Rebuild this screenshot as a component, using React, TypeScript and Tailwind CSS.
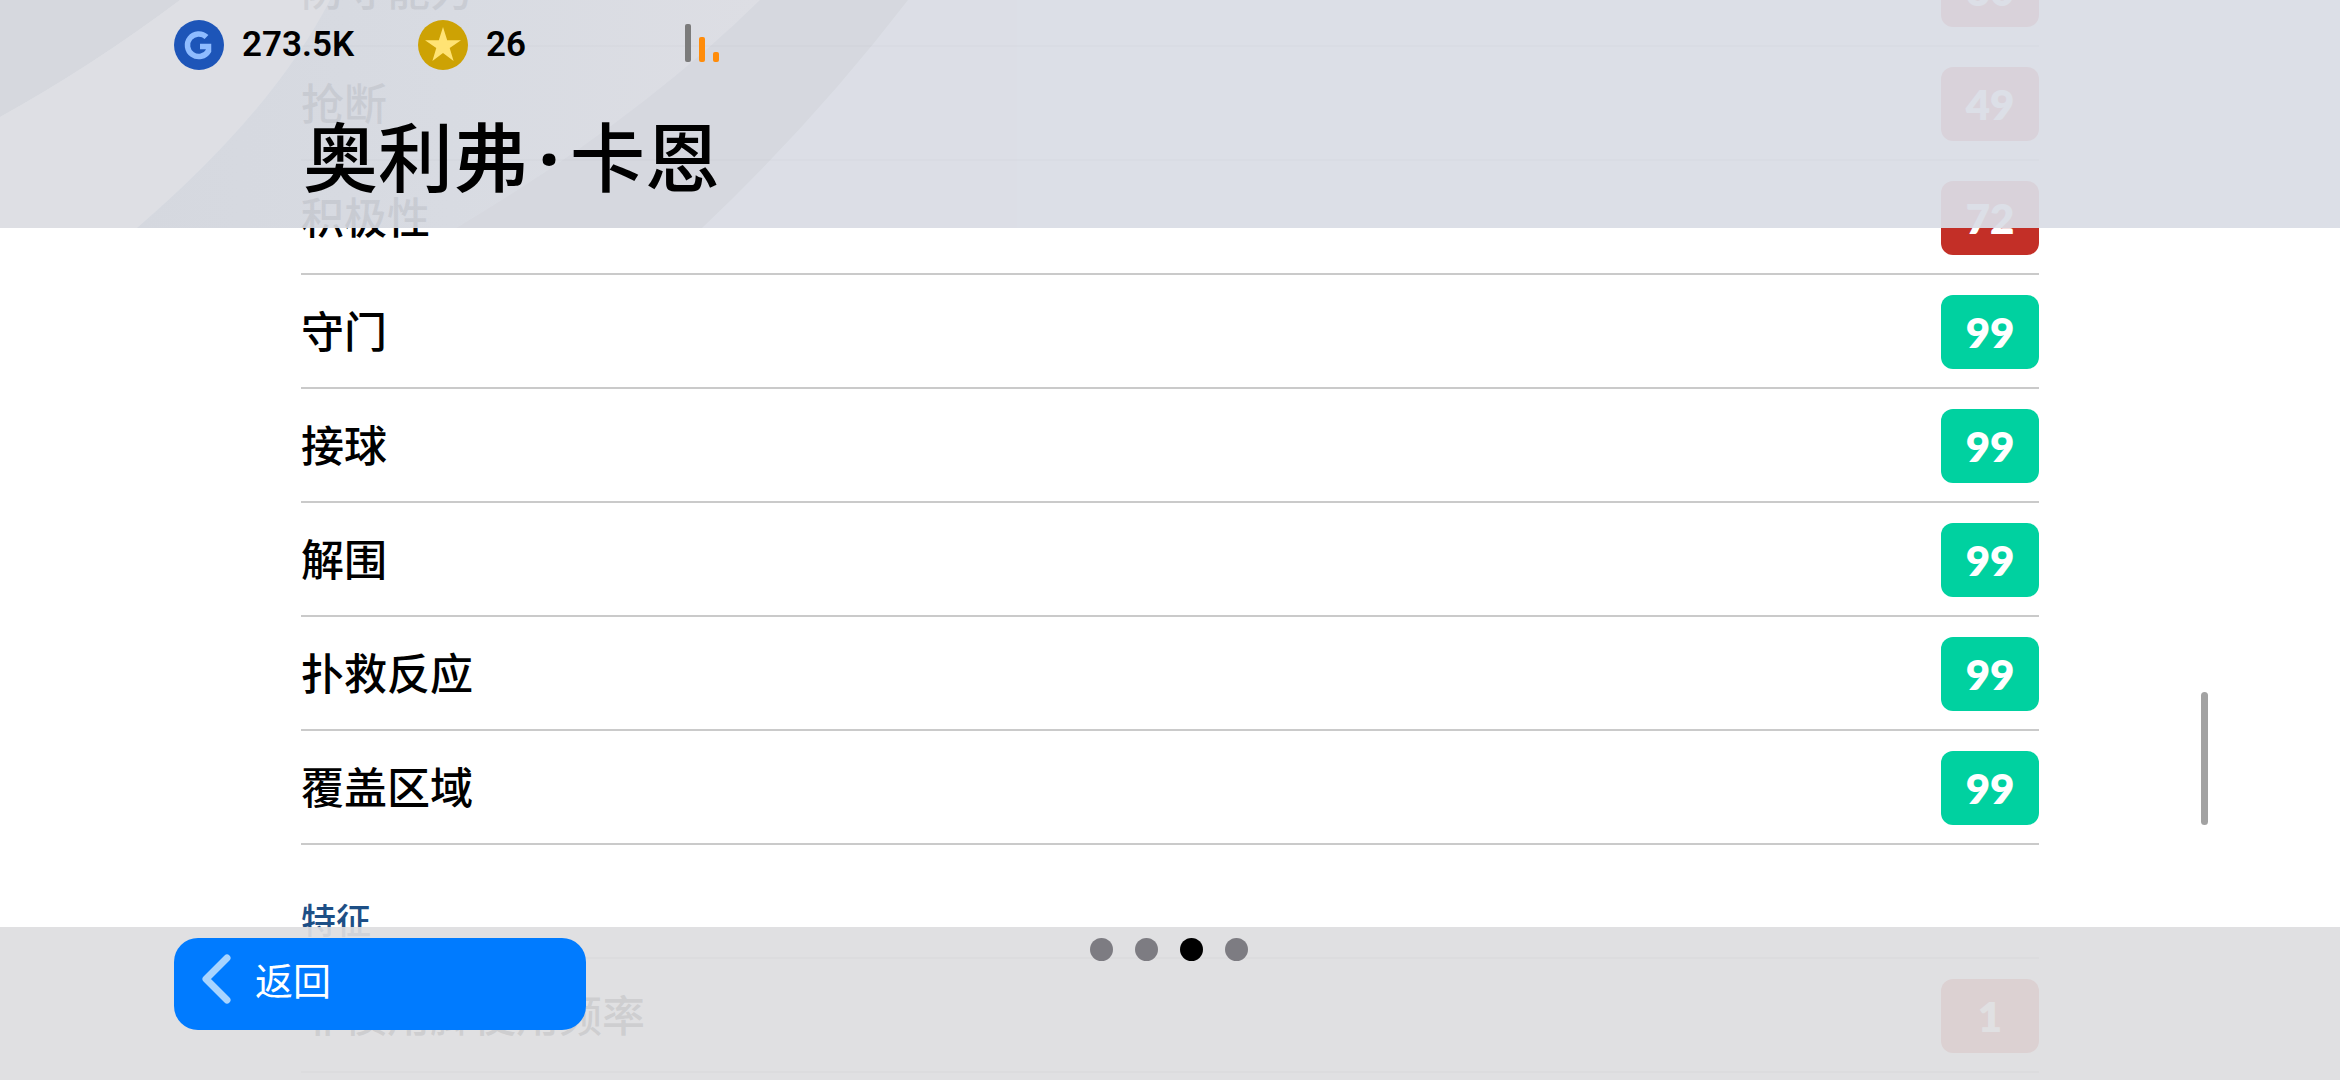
import React from "react";

type Stat = { label: string; value: number };

const stats: Stat[] = [
  { label: "防守能力", value: 60 },
  { label: "抢断", value: 49 },
  { label: "积极性", value: 72 },
  { label: "守门", value: 99 },
  { label: "接球", value: 99 },
  { label: "解围", value: 99 },
  { label: "扑救反应", value: 99 },
  { label: "覆盖区域", value: 99 },
];

const traits: Stat[] = [{ label: "非惯用脚使用频率", value: 1 }];

function StatRow({ label, value }: Stat) {
  return (
    <li className="flex h-[114px] items-center justify-between border-b-2 border-[#cacaca] pt-0.5">
      <span className="pb-1.5 text-[43px] leading-[48px] font-medium">{label}</span>
      <span
        className={
          "flex h-[74px] w-[98px] items-center justify-center rounded-xl font-[Lato,sans-serif] text-[42px] leading-[48px] font-extrabold text-white " +
          (value >= 80 ? "bg-[#00d1a0]" : "bg-[#c32f27]")
        }
      >
        {value}
      </span>
    </li>
  );
}

function HeaderShapes() {
  return (
    <svg className="absolute inset-0 h-full w-[1100px]" viewBox="0 0 1100 228" preserveAspectRatio="none" aria-hidden="true">
      <defs>
        <linearGradient id="mid" x1="0" x2="1" y1="0" y2="0">
          <stop offset="0" stopColor="#d3d6de" />
          <stop offset="0.5" stopColor="#d6d9e1" />
          <stop offset="1" stopColor="#dbdce3" />
        </linearGradient>
      </defs>
      <path d="M0 0H180Q92 66 0 117Z" fill="#d4d6dc" />
      <path d="M180 0H330Q274 110 137 228H0V117Q92 66 180 0Z" fill="#dcdee3" />
      <path d="M330 0H760Q638 120 456 228H137Q274 110 330 0Z" fill="url(#mid)" />
      <path d="M760 0H908Q816 120 702 228H456Q638 120 760 0Z" fill="#d4d6de" />
    </svg>
  );
}

function GpCoin() {
  return (
    <svg className="size-[50px]" viewBox="0 0 50 50" aria-hidden="true">
      <circle cx="25" cy="25" r="25" fill="#1d55b8" />
      <path d="M32.500 17A11.300 11.300 0 1 0 34.500 31V26.500H26" fill="none" stroke="#8fbcff" strokeWidth="5.500" />
    </svg>
  );
}

function StarCoin() {
  return (
    <svg className="size-[50px]" viewBox="0 0 50 50" aria-hidden="true">
      <circle cx="25" cy="25" r="25" fill="#cda204" />
      <path d="M25 7L29.200 20.200H43L31.700 28L35.600 41L25 33L14.400 41L18.300 28L7 20.200H20.800Z" fill="#ffe374" />
    </svg>
  );
}

export default function App() {
  return (
    <div className="grid h-screen grid-cols-[minmax(0,1fr)] grid-rows-[minmax(0,1fr)] overflow-hidden bg-white font-['Noto_Sans_CJK_SC',sans-serif] text-black">
      <main className="col-start-1 row-start-1 overflow-hidden px-[301px]">
        <ul className="-mt-[67px]">
          {stats.map((s) => (
            <StatRow key={s.label} {...s} />
          ))}
        </ul>
        <h2 className="flex h-[114px] items-end border-b-2 border-[#cacaca] pb-3.5 text-[35px] leading-[48px] font-medium text-[#1d4f86]">
          特征
        </h2>
        <ul>
          {traits.map((s) => (
            <StatRow key={s.label} {...s} />
          ))}
        </ul>
      </main>

      <header className="relative z-10 col-start-1 row-start-1 h-[228px] self-start">
        <div className="absolute inset-0 bg-[#dadde5] opacity-94">
          <HeaderShapes />
        </div>
        <div className="relative pt-5 pl-[174px]">
          <div className="flex h-[50px] items-center font-[Roboto,sans-serif] text-[35px] font-semibold">
            <div className="flex w-[244px] items-center gap-[18px]">
              <GpCoin />
              <span>273.5K</span>
            </div>
            <div className="flex w-[266px] items-center gap-[18px]">
              <StarCoin />
              <span>26</span>
            </div>
            <svg className="h-[42px] w-10" viewBox="0 0 40 42" role="img" aria-label="信号">
              <rect x="1" y="0" width="6" height="38" rx="2" fill="#7b7b7b" />
              <rect x="15" y="13" width="6" height="25" rx="2" fill="#ff8c0a" />
              <rect x="29" y="28" width="6" height="10" rx="2" fill="#ff8c0a" />
            </svg>
          </div>
          <h1 className="mt-10 ml-[129px] text-[75px] leading-[88px] font-medium">
            奥利弗<span className="inline-block w-[42px] text-center font-['Noto_Sans',sans-serif] font-bold">·</span>卡恩
          </h1>
        </div>
      </header>

      <div className="z-10 col-start-1 row-start-1 mr-[132px] mb-[255px] h-[133px] w-[7px] self-end justify-self-end rounded-full bg-[#a2a2a2]" />

      <footer className="relative z-10 col-start-1 row-start-1 h-[153px] self-end">
        <div className="absolute inset-0 bg-[#dedee0] opacity-93" />
        <div className="relative grid grid-cols-[1fr_auto_1fr] items-start pt-[11px] pr-[176px] pl-[174px]">
          <button className="flex h-[92px] w-[412px] items-center gap-6 rounded-3xl bg-[#007bff] pb-2.5 pl-7 text-[38px] leading-[48px] font-normal text-white">
            <svg className="h-[50px] w-[29px]" viewBox="0 0 29 50" aria-hidden="true">
              <path d="M25 4L4 25L25 46" fill="none" stroke="#a8d4ff" strokeWidth="7" strokeLinecap="round" strokeLinejoin="round" />
            </svg>
            返回
          </button>
          <div className="flex gap-[22px]">
            <i className="size-[23px] rounded-full bg-[#7d7c82]" />
            <i className="size-[23px] rounded-full bg-[#7d7c82]" />
            <i className="size-[23px] rounded-full bg-black" />
            <i className="size-[23px] rounded-full bg-[#7d7c82]" />
          </div>
        </div>
      </footer>
    </div>
  );
}
